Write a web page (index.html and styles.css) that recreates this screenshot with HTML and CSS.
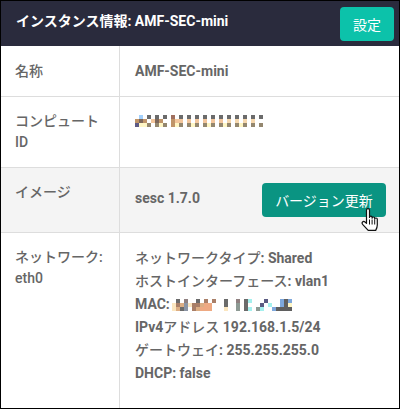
FILE: index.html
```html
<!DOCTYPE html>
<html lang="ja">
<head>
    <meta charset="UTF-8">
    <title>インスタンス情報</title>
    <link rel="stylesheet" href="styles.css">
</head>
<body>
    <div class="panel">
        <header class="panel-header">
            <h2>インスタンス情報: AMF-SEC-mini</h2>
            <button class="btn btn-settings">設定</button>
        </header>
        <table class="info-table">
            <tr class="row-name">
                <th>名称</th>
                <td><b>AMF-SEC-mini</b></td>
            </tr>
            <tr>
                <th>コンピュート ID</th>
                <td>
                    <svg class="mosaic mosaic-id" width="128" height="12" viewBox="0 0 32 3" shape-rendering="crispEdges">
                        <path fill="#a3d0fb" d="M1 0h1v1H1z"/>
                        <path fill="#6b6b6b" d="M3 0h1v1H3zM5 0h1v1H5zM7 0h1v1H7zM11 0h1v1h-1zM13 0h1v1h-1zM15 0h1v1h-1zM17 0h1v1h-1zM19 0h1v1h-1zM21 0h1v1h-1zM23 0h1v1h-1zM25 0h1v1h-1zM27 0h1v1h-1zM29 0h1v1h-1zM31 0h1v1h-1z"/>
                        <path fill="#a0705f" d="M9 0h1v1H9z"/>
                        <path fill="#c09468" d="M0 1h1v1H0zM2 1h1v1H2zM6 1h1v1H6zM9 1h1v2H9z"/>
                        <path fill="#7d675a" d="M1 1h1v1H1zM5 1h1v1H5z"/>
                        <path fill="#f3c69c" d="M4 1h1v1H4zM10 1h2v1h-2zM13 1h1v1h-1zM15 1h1v1h-1zM17 1h1v1h-1zM19 1h1v1h-1zM21 1h1v1h-1z"/>
                        <path fill="#f6d8ae" d="M23 1h1v1h-1zM25 1h1v1h-1zM27 1h1v1h-1zM29 1h1v1h-1z"/>
                        <path fill="#5d5a85" d="M0 2h1v1H0z"/>
                        <path fill="#fff6c4" d="M1 2h2v1H1zM6 2h1v1H6zM10 2h1v1h-1zM14 2h1v1h-1zM18 2h1v1h-1zM22 2h1v1h-1zM26 2h1v1h-1z"/>
                        <path fill="#94876f" d="M3 2h1v1H3zM5 2h1v1H5zM7 2h1v1H7zM11 2h1v1h-1zM13 2h1v1h-1zM15 2h1v1h-1zM17 2h1v1h-1zM19 2h1v1h-1zM21 2h1v1h-1zM23 2h1v1h-1zM25 2h1v1h-1zM27 2h1v1h-1zM29 2h1v1h-1zM31 2h1v1h-1z"/>
                    </svg>
                </td>
            </tr>
            <tr class="row-hover">
                <th>イメージ</th>
                <td>
                    <div class="image-cell">
                        <b class="image-name">sesc 1.7.0</b>
                        <button class="btn btn-update">バージョン更新
                            <svg class="hand" width="20" height="25" viewBox="0 0 20 25">
                                <path fill="#fff" stroke="#111" stroke-width="1.2" stroke-linejoin="round" d="M5.5 2.2c0-2 3-2 3 0v7.2c0-1.6 2.6-1.6 2.6 0v.8c0-1.6 2.6-1.6 2.6 0v.9c0-1.500 2.600-1.500 2.600 .2V17c0 2-.6 3.600-1.600 5.400H7.200L1.600 16.300c-1.400-1.700.6-3.700 2.400-2.300l1.500 1.400z"/>
                                <path fill="none" stroke="#111" d="M8.500 11.500v5M11.100 11.500v5M13.700 11.500v5"/>
                            </svg>
                        </button>
                    </div>
                </td>
            </tr>
            <tr class="row-last">
                <th>ネットワーク: eth0</th>
                <td>
                    <div class="net-line">ネットワークタイプ<b>: Shared</b></div>
                    <div class="net-line">ホストインターフェース<b>: vlan1</b></div>
                    <div class="net-line net-line-mac"><b>MAC:</b>
                        <svg class="mosaic mosaic-mac" width="120" height="12" viewBox="0 0 30 3" shape-rendering="crispEdges">
                            <path fill="#6b6b6b" d="M1 0h1v1H1zM6 0h1v1H6zM13 0h1v2h-1zM18 0h1v3h-1zM2 2h1v1H2z"/>
                            <path fill="#8f8080" d="M3 0h1v1H3zM16 0h1v1h-1z"/>
                            <path fill="#a97f68" d="M8 0h1v1H8zM1 1h1v1H1zM5 1h2v1H5zM9 1h1v1H9zM5 2h1v1H5zM10 0h1v1h-1z"/>
                            <path fill="#fbe6c0" d="M0 1h1v2H0zM4 1h1v1H4zM13 2h1v1h-1z"/>
                            <path fill="#dcae84" d="M2 1h1v1H2zM7 1h1v1H7zM6 2h1v1H6zM1 2h1v1H1z"/>
                            <path fill="#eea982" d="M8 1h2v1H8zM7 2h3v1H7z"/>
                            <path fill="#8b95a5" d="M3 1h1v2H3z"/>
                            <path fill="#8d9a94" d="M16 1h1v2h-1zM21 2h1v1h-1z"/>
                            <path fill="#a5f0ee" d="M19 0h1v1h-1zM19 2h1v1h-1zM22 2h1v1h-1zM24 1h1v1h-1z"/>
                            <path fill="#5b5b82" d="M22 1h1v1h-1zM23 0h1v1h-1z"/>
                            <path fill="#7ea8dc" d="M27 0h1v1h-1zM27 1h1v1h-1zM25 2h1v1h-1zM29 0h1v1h-1z"/>
                            <path fill="#5f5f5f" d="M26 2h4v1h-4zM28 1h1v1h-1zM28 0h1v1h-1z"/>
                            <path fill="#fff6c4" d="M29 1h1v1h-1z"/>
                        </svg>
                    </div>
                    <div class="net-line"><b>IPv4</b>アドレス <b>192.168.1.5/24</b></div>
                    <div class="net-line">ゲートウェイ<b>: 255.255.255.0</b></div>
                    <div class="net-line"><b>DHCP: false</b></div>
                </td>
            </tr>
        </table>
    </div>
</body>
</html>
```

FILE: styles.css
```css
html, body {
    margin: 0;
    padding: 0;
}

body {
    font-family: "Roboto", "Noto Sans CJK JP", sans-serif;
    font-size: 14px;
    color: #666;
    background-color: #fff;
}

.panel {
    box-sizing: border-box;
    width: 400px;
    height: 409px;
    border: 1px solid #000;
    display: flex;
    flex-direction: column;
    overflow: hidden;
}

.panel-header {
    background-color: #2a2b3d;
    color: #fff;
    height: 45px;
    flex-shrink: 0;
    box-sizing: border-box;
    padding: 6px 5px 0 15px;
    display: flex;
    justify-content: space-between;
    align-items: flex-start;
}

.panel-header h2 {
    margin: 0;
    padding-top: 4px;
    font-size: 14px;
    line-height: 21px;
    font-weight: 700;
}

.btn {
    border: none;
    border-radius: 4px;
    color: #fff;
    font-family: inherit;
    font-size: 14px;
    cursor: pointer;
}

.btn-settings {
    width: 54px;
    height: 34px;
    background-color: #0cc2aa;
}

.btn-update {
    position: relative;
    width: 124px;
    height: 34px;
    padding: 0;
    background-color: #0a9482;
}

.hand {
    position: absolute;
    left: 99px;
    top: 25px;
}

.info-table {
    width: 100%;
    height: 362px;
    table-layout: fixed;
    border-collapse: separate;
    border-spacing: 0;
}

.info-table th, .info-table td {
    padding: 14px;
    line-height: 21px;
    text-align: left;
    vertical-align: top;
    border-bottom: 1px solid #ddd;
}

.info-table th {
    width: 90px;
    font-weight: 500;
    border-right: 1px solid #ddd;
}

.info-table td {
    padding-left: 15px;
    padding-right: 13px;
    font-weight: 500;
}

.row-name th, .row-name td {
    padding-top: 15px;
}

.row-hover {
    background-color: #f4f4f4;
}

.row-hover td {
    padding-top: 15px;
    padding-bottom: 15px;
}

.row-last {
    height: 100%;
}

.row-last th, .row-last td {
    border-bottom: none;
}

.image-cell {
    display: flex;
    justify-content: space-between;
    align-items: center;
    height: 34px;
}

.image-name {
    margin-bottom: 4px;
}

.net-line {
    line-height: 23px;
}

.net-line-mac {
    display: flex;
    align-items: center;
}

.mosaic {
    display: block;
}

.mosaic-id {
    margin-top: 4px;
}

.mosaic-mac {
    margin-left: 2px;
}
```
